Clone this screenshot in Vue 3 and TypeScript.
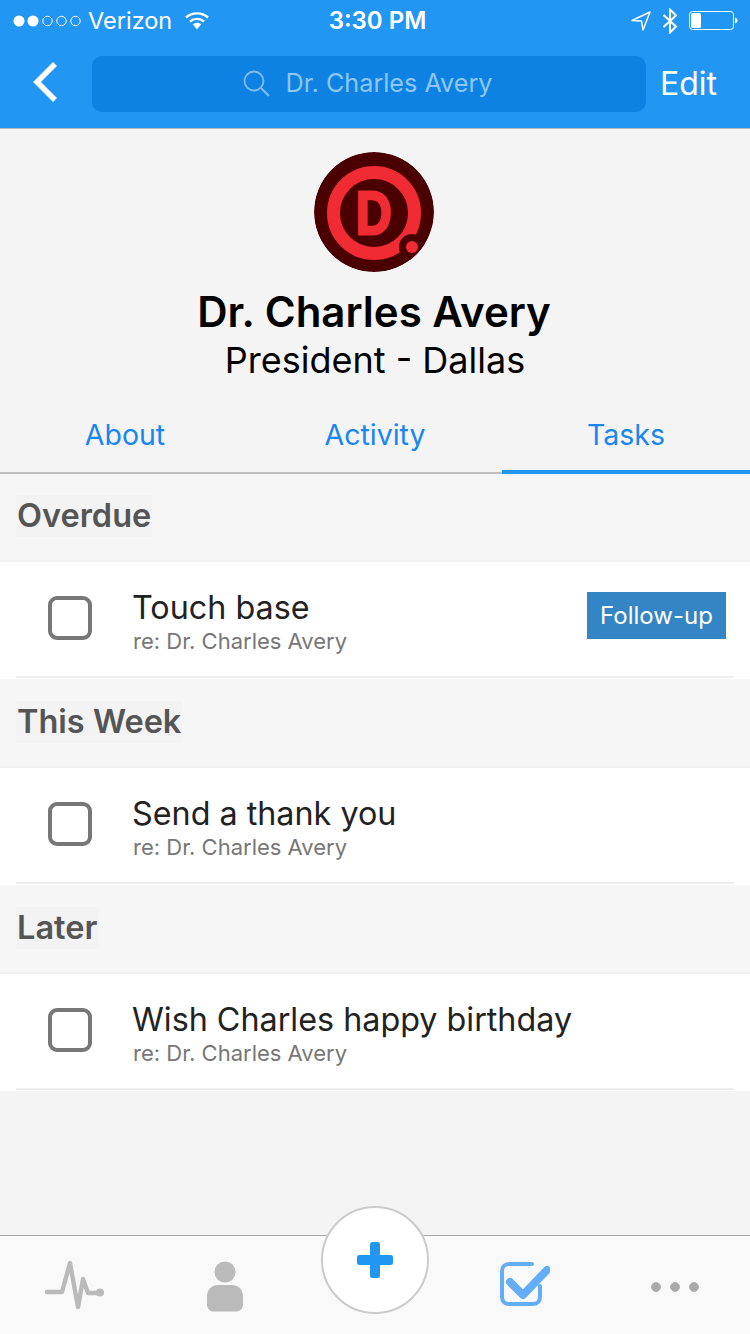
<script setup lang="ts">
interface Task {
  title: string
  tag?: string
}

interface Section {
  name: string
  task: Task
}

const sections: Section[] = [
  { name: 'Overdue', task: { title: 'Touch base', tag: 'Follow-up' } },
  { name: 'This Week', task: { title: 'Send a thank you' } },
  { name: 'Later', task: { title: 'Wish Charles happy birthday' } },
]

const tabs = ['About', 'Activity', 'Tasks']
const activeTab = 'Tasks'
</script>

<template>
  <div class="page">
    <header class="header">
      <div class="status">
        <div class="status-left">
          <svg class="signal" width="70" height="12" viewBox="0 0 70 12">
            <circle cx="6" cy="6" r="5.5" fill="#fff" />
            <circle cx="20" cy="6" r="5.5" fill="#fff" />
            <circle cx="34.5" cy="6" r="4.7" fill="none" stroke="#fff" stroke-width="1" />
            <circle cx="48.5" cy="6" r="4.7" fill="none" stroke="#fff" stroke-width="1" />
            <circle cx="62.5" cy="6" r="4.7" fill="none" stroke="#fff" stroke-width="1" />
          </svg>
          <span class="carrier">Verizon</span>
          <svg width="24" height="19" viewBox="0 0 24 19">
            <path d="M1 6.500C7 1 17 1 23 6.500" fill="none" stroke="#fff" stroke-width="2.4" />
            <path d="M5 10.500C9 7 15 7 19 10.500" fill="none" stroke="#fff" stroke-width="2.4" />
            <path d="M7.800 13.200C10.400 11.200 13.600 11.200 16.200 13.200L12 18.400Z" fill="#fff" />
          </svg>
        </div>
        <span class="time">3:30 PM</span>
        <div class="status-right">
          <svg width="20" height="20" viewBox="0 0 20 20">
            <path d="M19 1L1 9.500L10.500 10L12 19Z" fill="none" stroke="#fff" stroke-width="1.4" stroke-linejoin="round" />
          </svg>
          <svg width="16" height="26" viewBox="0 0 16 26">
            <path d="M1.500 7L14 18.500L8 24.500V1.500L14 7.500L1.500 19" fill="none" stroke="#fff" stroke-width="2" />
          </svg>
          <svg width="49" height="20" viewBox="0 0 49 20">
            <rect x="0.500" y="0.500" width="44" height="18" rx="3" fill="none" stroke="#fff" stroke-width="1" />
            <rect x="2" y="2" width="10" height="15" rx="1.500" fill="#fff" />
            <path d="M46 6.500C47.500 6.800 48.500 8 48.500 9.500C48.500 11 47.500 12.200 46 12.500Z" fill="#fff" />
          </svg>
        </div>
      </div>
      <nav class="nav">
        <svg class="back" width="26" height="42" viewBox="0 0 26 42">
          <path d="M23 3L5 21L23 39" fill="none" stroke="#fff" stroke-width="5.500" />
        </svg>
        <div class="search">
          <svg width="27" height="27" viewBox="0 0 27 27">
            <circle cx="11" cy="11" r="9.500" fill="none" stroke="#7fbdf2" stroke-width="1.800" />
            <path d="M18 18L26 26" stroke="#7fbdf2" stroke-width="2.200" />
          </svg>
          <span>Dr. Charles Avery</span>
        </div>
        <span class="edit">Edit</span>
      </nav>
    </header>

    <section class="profile">
      <svg class="avatar" width="120" height="120" viewBox="0 0 120 120">
        <defs>
          <clipPath id="avatar-clip">
            <circle cx="60" cy="60" r="60" />
          </clipPath>
        </defs>
        <g clip-path="url(#avatar-clip)">
          <circle cx="60" cy="60" r="60" fill="#4a0000" />
          <circle cx="60" cy="61" r="40.500" fill="none" stroke="#f02b33" stroke-width="13" />
          <circle cx="98" cy="95" r="13" fill="#4a0000" />
          <circle cx="98" cy="95" r="6" fill="#f02b33" />
          <text class="avatar-letter" transform="translate(42 82) scale(0.8 1)">D</text>
        </g>
      </svg>
      <h1 class="name">Dr. Charles Avery</h1>
      <p class="role">President - Dallas</p>
    </section>

    <div class="tabs">
      <div v-for="tab in tabs" :key="tab" class="tab" :class="{ active: tab === activeTab }">{{ tab }}</div>
    </div>

    <main class="list">
      <template v-for="section in sections" :key="section.name">
        <div class="section-head"><span>{{ section.name }}</span></div>
        <div class="row">
          <div class="row-inner">
            <span class="check"></span>
            <div class="row-text">
              <div class="title">{{ section.task.title }}</div>
              <div class="sub">re: Dr. Charles Avery</div>
            </div>
            <span v-if="section.task.tag" class="tag">{{ section.task.tag }}</span>
          </div>
        </div>
      </template>
    </main>

    <footer class="tabbar">
      <div class="bar-item">
        <svg class="pulse" width="60" height="52" viewBox="0 0 60 52">
          <path d="M2 33H17L25 4L33 48L38 20L43 34H56" fill="none" stroke="#bababa" stroke-width="4.400" stroke-linecap="round" stroke-linejoin="round" />
          <circle cx="55" cy="33.500" r="4" fill="#bababa" />
        </svg>
      </div>
      <div class="bar-item">
        <svg class="person" width="38" height="52" viewBox="0 0 38 52">
          <circle cx="19" cy="11" r="10.500" fill="#bababa" />
          <path d="M1 36C1 28 6 24 12 24H26C32 24 37 28 37 36V43C37 48 34 50 30 50.500H8C4 50.500 1 48 1 43Z" fill="#bababa" />
        </svg>
      </div>
      <div class="bar-item"></div>
      <div class="bar-item">
        <svg width="50" height="44" viewBox="0 0 50 44">
          <path d="M32 2H9C5 2 2 5 2 9V35C2 39 5 42 9 42H33C37 42 40 39 40 35V24" fill="none" stroke="#64adfb" stroke-width="4" stroke-linecap="round" />
          <path d="M10 20L23 33L47 8" fill="none" stroke="#64adfb" stroke-width="8" stroke-linejoin="round" stroke-linecap="round" />
        </svg>
      </div>
      <div class="bar-item">
        <svg class="dots" width="48" height="10" viewBox="0 0 48 10">
          <circle cx="5" cy="5" r="4.500" fill="#a9a9a9" stroke="#b4b4b4" stroke-width="1" />
          <circle cx="24" cy="5" r="4.500" fill="#a9a9a9" stroke="#b4b4b4" stroke-width="1" />
          <circle cx="43" cy="5" r="4.500" fill="#a9a9a9" stroke="#b4b4b4" stroke-width="1" />
        </svg>
      </div>
      <button class="fab">
        <svg width="36" height="36" viewBox="0 0 36 36">
          <rect x="13" y="0" width="10" height="36" rx="2.500" fill="#2196f3" />
          <rect x="0" y="13" width="36" height="10" rx="2.500" fill="#2196f3" />
        </svg>
      </button>
    </footer>
  </div>
</template>

<style>
html,
body {
  margin: 0;
  background: #f4f4f4;
}
</style>

<style scoped>
.page {
  width: 750px;
  height: 1334px;
  display: flex;
  flex-direction: column;
  overflow: hidden;
  background: #f4f4f4;
  font-family: Inter, "Noto Sans", sans-serif;
}
.header {
  height: 128px;
  background: #2196f3;
  border-bottom: 1px solid #b9b9b9;
  color: #fff;
  flex: none;
}
.status {
  height: 41px;
  padding: 0 12px 0 13px;
  display: grid;
  grid-template-columns: 1fr auto 1fr;
  align-items: center;
}
.status-left {
  display: flex;
  align-items: center;
}
.carrier {
  margin-left: 5px;
  font-size: 23.5px;
}
.status-left svg:last-child {
  margin-left: 13px;
}
.time {
  margin-left: 4px;
  font-size: 24px;
  font-weight: 600;
}
.status-right {
  display: flex;
  align-items: center;
  justify-content: flex-end;
  gap: 11px;
}
.nav {
  height: 87px;
  display: flex;
  align-items: flex-start;
  padding: 15px 0 0 32px;
  box-sizing: border-box;
}
.back {
  flex: none;
  margin-top: 5px;
}
.search {
  width: 554px;
  height: 56px;
  margin-left: 34px;
  padding: 0 3px 2px 0;
  box-sizing: border-box;
  border-radius: 10px;
  background: #0d82e3;
  color: #8cc7f7;
  font-size: 25.2px;
  display: flex;
  align-items: center;
  justify-content: center;
  gap: 16px;
  flex: none;
}
.edit {
  margin: 8px 0 0 14px;
  font-size: 32px;
}
.profile {
  height: 281px;
  padding: 23px 2px 0 0;
  box-sizing: border-box;
  display: flex;
  flex-direction: column;
  align-items: center;
  flex: none;
}
.avatar {
  display: block;
  flex: none;
  filter: blur(0.6px);
}
.avatar-letter {
  font-family: "Liberation Sans", sans-serif;
  font-size: 62px;
  font-weight: 700;
  fill: #f02b33;
  stroke: #f02b33;
  stroke-width: 3px;
}
.name {
  margin: 16px 0 0;
  font-size: 42px;
  line-height: 48px;
  font-weight: 600;
  color: #000;
}
.role {
  margin: 0 0 0 2px;
  font-size: 36px;
  line-height: 48px;
  color: #000;
}
.tabs {
  height: 64px;
  display: grid;
  grid-template-columns: 1fr 1fr 1fr;
  flex: none;
  box-sizing: border-box;
  border-bottom: 2px solid #bdbdbd;
}
.tab {
  color: #1a86f0;
  font-size: 28.5px;
  line-height: 50px;
  text-align: center;
  height: 64px;
  box-sizing: border-box;
}
.tab.active {
  margin-left: 2px;
  border-bottom: 4px solid #2196f3;
}
.list {
  flex: 1;
}
.section-head {
  height: 87px;
  box-sizing: content-box;
  background: #f6f6f6;
  border-bottom: 2px solid #f0f0f0;
  padding: 0 0 0 16px;
  display: flex;
  align-items: center;
}
.section-head:first-child {
  height: 86px;
}
.section-head span {
  font-size: 32.5px;
  font-weight: 600;
  color: #555;
  line-height: 42px;
  padding: 0 1px;
  margin-bottom: 2px;
  background: #f3f3f3;
}
.section-head:first-child span {
  margin-bottom: 3px;
}
.row {
  height: 117px;
  background: #fff;
  padding: 0 16px;
  box-sizing: border-box;
}
.row-inner {
  height: 116px;
  padding: 0 8px 2px 32px;
  box-sizing: border-box;
  border-bottom: 2px solid #efefef;
  display: flex;
  align-items: center;
}
.check {
  width: 44px;
  height: 44px;
  box-sizing: border-box;
  border: 4px solid #777;
  border-radius: 9px;
  flex: none;
}
.row-text {
  margin-left: 40px;
  padding-top: 6px;
  flex: 1;
}
.title {
  font-size: 32.3px;
  line-height: 40px;
  color: #222;
}
.sub {
  padding-left: 1px;
  font-size: 22px;
  line-height: 26px;
  color: #777;
}
.tag {
  width: 139px;
  height: 47px;
  line-height: 47px;
  text-align: center;
  background: #3385c6;
  color: #fff;
  font-size: 24px;
  margin-top: -5px;
}
.tabbar {
  position: relative;
  height: 99px;
  box-sizing: border-box;
  border-top: 1px solid #a8a8a8;
  background: #f9f9f9;
  display: grid;
  grid-template-columns: repeat(5, 1fr);
  flex: none;
}
.bar-item {
  display: flex;
  align-items: center;
  justify-content: center;
  padding-bottom: 2px;
}
.pulse {
  margin-top: 1px;
}
.person {
  margin-top: 5px;
}
.dots {
  margin-top: 5px;
}
.fab {
  position: absolute;
  left: 321px;
  top: -30px;
  width: 108px;
  height: 108px;
  padding: 0;
  box-sizing: border-box;
  border: 2px solid #cbcbcb;
  border-radius: 50%;
  background: #fff;
  display: flex;
  align-items: center;
  justify-content: center;
}
</style>
